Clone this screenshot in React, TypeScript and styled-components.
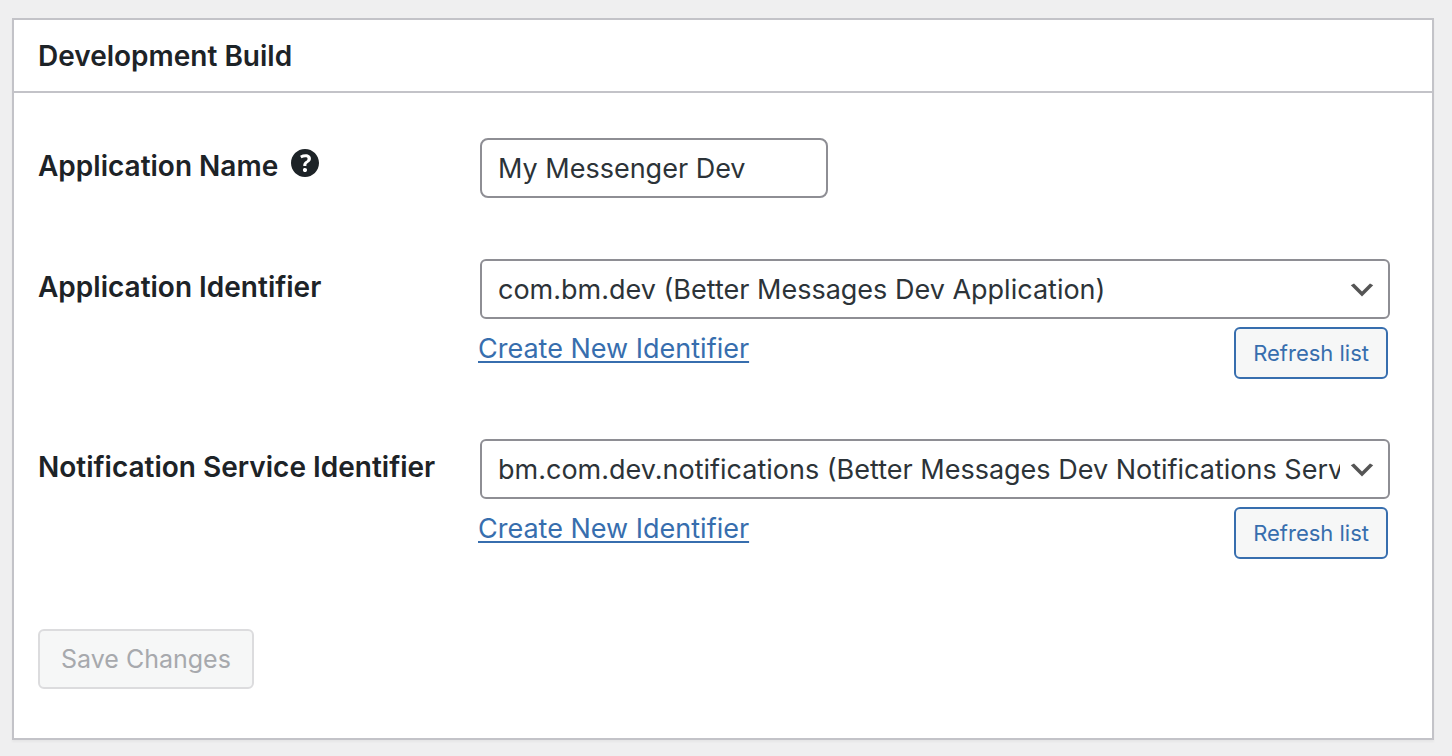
import React from "react";
import styled, { createGlobalStyle } from "styled-components";

const GlobalStyle = createGlobalStyle`
  *, *::before, *::after { box-sizing: border-box; }
  body {
    margin: 0;
    background: #efeff0;
    color: #1d2327;
    font-family: Inter, "Liberation Sans", sans-serif;
    font-size: 27px;
    line-height: 36px;
  }
`;

const Page = styled.main`
  padding: 18px 18px 16px 12px;
`;

const Card = styled.section`
  background: #fff;
  border: 2px solid #c3c3c8;
  box-shadow: 0 2px 2px rgba(0, 0, 0, 0.04);
`;

const CardTitle = styled.h2`
  margin: 0;
  padding: 18px 24px 17px;
  border-bottom: 2px solid #c3c3c8;
  font-size: 28px;
  font-weight: 600;
  line-height: 36px;
`;

const Form = styled.form`
  display: flex;
  flex-direction: column;
  gap: 60px;
  padding: 45px 42px 49px 24px;
`;

const Row = styled.div`
  display: grid;
  grid-template-columns: 440px minmax(0, 1fr);
  min-height: 61px;
`;

const LabelCell = styled.div`
  display: flex;
  align-items: flex-start;
  gap: 7px;
  padding-top: 10px;
`;

const Label = styled.label`
  font-size: 28px;
  font-weight: 600;
`;

const HelpButton = styled.button`
  display: flex;
  margin: -5px 0;
  padding: 0;
  border: 0;
  background: none;
  color: inherit;
  cursor: help;
`;

const FieldCell = styled.div`
  display: flex;
  flex-direction: column;
`;

const TextInput = styled.input`
  width: 348px;
  height: 60px;
  margin: 0 0 0 2px;
  padding: 0 16px;
  border: 2px solid #8e8e94;
  border-radius: 8px;
  background: #fff;
  color: #2c3338;
  font: inherit;
`;

const SelectBox = styled.div`
  position: relative;
  margin-left: 2px;
`;

const Select = styled.select`
  display: block;
  appearance: none;
  width: 100%;
  height: 60px;
  margin: 0;
  padding: 2px 48px 0 16px;
  border: 2px solid #8e8e94;
  border-radius: 6px;
  background: #fff;
  color: #2c3338;
  font: inherit;
`;

const Chevron = styled.svg`
  position: absolute;
  top: 15px;
  right: 12px;
  pointer-events: none;
`;

const Actions = styled.div`
  display: flex;
  align-items: flex-start;
  justify-content: space-between;
  padding: 8px 2px 0 0;
`;

const Link = styled.a`
  margin-top: 4px;
  color: #376eae;
  text-decoration: underline;
  text-decoration-thickness: 2px;
  text-underline-offset: 3px;
`;

const Button = styled.button<{ $large?: boolean }>`
  height: ${(p) => (p.$large ? 60 : 52)}px;
  padding: 0 ${(p) => (p.$large ? 21 : 17)}px;
  border: 2px solid #376eae;
  border-radius: 6px;
  background: #f6f7f7;
  color: #376eae;
  font-family: inherit;
  font-size: ${(p) => (p.$large ? 25 : 22)}px;
  cursor: pointer;

  &:disabled {
    border-color: #dcdcde;
    color: #a7a9ad;
    cursor: default;
  }
`;

const Footer = styled.div`
  display: flex;
  padding-top: 10px;
`;

interface IdentifierRowProps {
  id: string;
  label: string;
  option: string;
}

function IdentifierRow({ id, label, option }: IdentifierRowProps) {
  return (
    <Row>
      <LabelCell>
        <Label htmlFor={id}>{label}</Label>
      </LabelCell>
      <FieldCell>
        <SelectBox>
          <Select id={id}>
            <option>{option}</option>
          </Select>
          <Chevron width="32" height="32" viewBox="0 0 20 20" aria-hidden="true">
            <path d="M5 6l5 5 5-5 2 1-7 7-7-7 2-1z" fill="#555" />
          </Chevron>
        </SelectBox>
        <Actions>
          <Link href="#create">Create New Identifier</Link>
          <Button type="button">Refresh list</Button>
        </Actions>
      </FieldCell>
    </Row>
  );
}

export default function App() {
  return (
    <>
      <GlobalStyle />
      <Page>
        <Card>
          <CardTitle>Development Build</CardTitle>
          <Form onSubmit={(e) => e.preventDefault()}>
            <Row>
              <LabelCell>
                <Label htmlFor="app-name">Application Name</Label>
                <HelpButton type="button" aria-label="Help">
                  <svg width="40" height="40" viewBox="0 0 20 20" fill="currentColor" aria-hidden="true">
                    <path d="M17 10c0-3.87-3.14-7-7-7-3.87 0-7 3.13-7 7s3.13 7 7 7c3.86 0 7-3.13 7-7zm-6.3 1.48H9.14v-.43c0-.38.08-.7.24-.98s.46-.57.88-.89c.41-.29.68-.53.81-.71.14-.18.2-.39.2-.62 0-.25-.09-.44-.28-.58-.19-.13-.45-.19-.79-.19-.58 0-1.25.19-2 .57l-.64-1.28c.87-.49 1.8-.74 2.77-.74.81 0 1.45.2 1.92.58.48.39.71.91.71 1.55 0 .43-.09.8-.29 1.11-.19.32-.57.67-1.11 1.06-.38.28-.61.49-.71.63-.1.15-.15.34-.15.57v.35zm-1.47 2.74c-.18-.17-.27-.42-.27-.73 0-.33.08-.58.26-.75s.43-.25.77-.25c.32 0 .57.09.75.26s.27.42.27.74c0 .3-.09.55-.27.72-.18.18-.43.27-.75.27-.33 0-.58-.09-.76-.26z" />
                  </svg>
                </HelpButton>
              </LabelCell>
              <FieldCell>
                <TextInput id="app-name" type="text" defaultValue="My Messenger Dev" />
              </FieldCell>
            </Row>
            <IdentifierRow
              id="app-identifier"
              label="Application Identifier"
              option="com.bm.dev (Better Messages Dev Application)"
            />
            <IdentifierRow
              id="service-identifier"
              label="Notification Service Identifier"
              option="bm.com.dev.notifications (Better Messages Dev Notifications Service)"
            />
            <Footer>
              <Button type="submit" $large disabled>
                Save Changes
              </Button>
            </Footer>
          </Form>
        </Card>
      </Page>
    </>
  );
}
